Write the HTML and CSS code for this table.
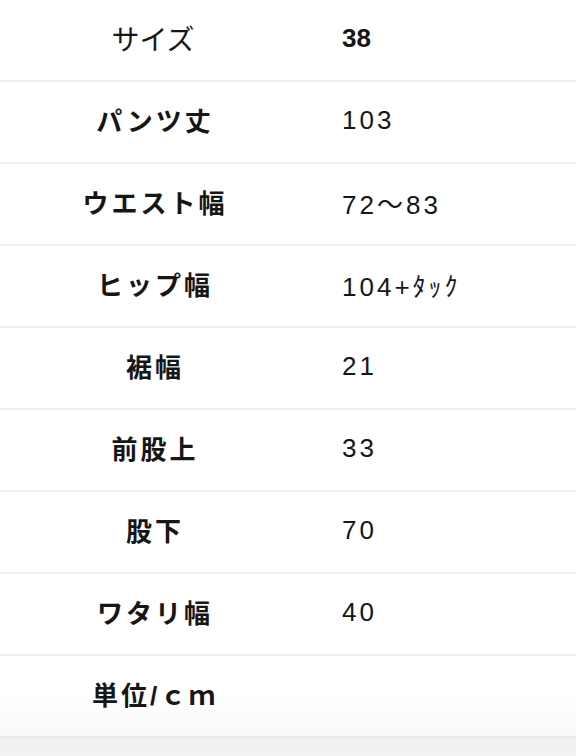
FILE: index.html
```html
<!DOCTYPE html>
<html lang="ja">
<head>
<meta charset="utf-8">
<link rel="stylesheet" href="styles.css">
</head>
<body>
<div class="table">
  <div class="row head"><div class="label">サイズ</div><div class="value">38</div></div>
  <div class="row"><div class="label">パンツ丈</div><div class="value">103</div></div>
  <div class="row"><div class="label">ウエスト幅</div><div class="value">72〜83</div></div>
  <div class="row"><div class="label">ヒップ幅</div><div class="value">104+ﾀｯｸ</div></div>
  <div class="row"><div class="label">裾幅</div><div class="value">21</div></div>
  <div class="row"><div class="label">前股上</div><div class="value">33</div></div>
  <div class="row"><div class="label">股下</div><div class="value">70</div></div>
  <div class="row"><div class="label">ワタリ幅</div><div class="value">40</div></div>
  <div class="row last"><div class="label">単位/ｃｍ</div><div class="value"></div></div>
</div>
<div class="footer"></div>
</body>
</html>
```
FILE: styles.css
```css
html, body {
  margin: 0;
  padding: 0;
  background: #ffffff;
}
body {
  font-family: "Liberation Sans", "Noto Sans CJK JP", sans-serif;
  color: #161616;
  width: 576px;
  height: 756px;
  overflow: hidden;
}
.table {
  display: flex;
  flex-direction: column;
}
.row {
  display: grid;
  grid-template-columns: 310px 1fr;
  height: 80px;
  align-items: center;
  border-bottom: 2px solid #efefef;
  font-size: 26px;
  letter-spacing: 3px;
}
.label {
  text-align: center;
  font-weight: 700;
  padding-bottom: 5px;
}
.value {
  padding-left: 32px;
  font-weight: 400;
  padding-bottom: 4px;
}
.head {
  letter-spacing: 0;
}
.head .label {
  font-weight: 400;
  font-size: 28px;
  padding-right: 4px;
}
.head .value {
  font-weight: 700;
}
.last {
  background: linear-gradient(#ffffff 40%, #f9f9f9);
  border-bottom-color: #e8e8e8;
}
.footer {
  height: 18px;
  background: linear-gradient(#f0f0f0, #f3f3f3);
}
```
